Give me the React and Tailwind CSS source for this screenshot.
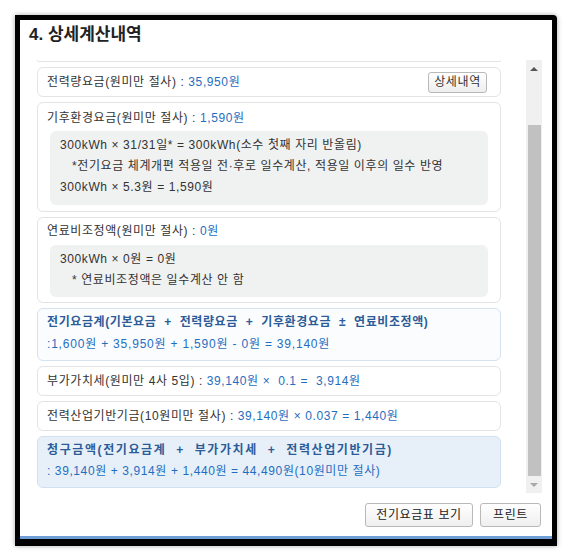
import React from "react";

const font = { fontFamily: '"Liberation Sans", "Noto Sans CJK KR", sans-serif' };

const Card = ({ className = "", children }) => (
    <div className={`w-[464px] shrink-0 rounded-[6px] border ${className}`}>{children}</div>
);

const Blue = ({ children }) => <span className="text-[#1f6ec0]">{children}</span>;

const App = () => {
    return (
        <div className="w-[572px] h-[558px] bg-white pt-[15px] pl-[15px] text-[12px] text-[#333] tracking-[0.6px]" style={font}>
            <div className="w-[542px] h-[531px] border-[5px] border-b-[7px] border-black rounded-tr-[4px] shadow-[0_0_5px_rgba(0,0,0,0.35)] flex flex-col bg-white">
                <div className="h-[40px] pl-[9px] pt-[4px] text-[17px] leading-[22px] font-bold text-[#222] tracking-normal">4. 상세계산내역</div>

                <div className="mx-[10px] h-[433px] flex">
                    <div className="flex-1 overflow-hidden pl-[7px] flex flex-col gap-[5px]">
                        <div className="w-[464px] h-[2px] shrink-0 border border-t-0 border-[#e4e4e4] rounded-b-[6px]" />

                        <Card className="border-[#e4e4e4] h-[30px] flex items-center justify-between pl-[9px] pr-[13px]">
                            <span>
                                전력량요금(원미만 절사) : <Blue>35,950원</Blue>
                            </span>
                            <button className="w-[59px] h-[21px] rounded-[3px] border border-[#b9b9b9] bg-gradient-to-b from-white to-[#eeeeee] text-[12px] text-[#333]">
                                상세내역
                            </button>
                        </Card>

                        <Card className="border-[#e4e4e4] pt-[6px] pb-[6px] px-[12px]">
                            <div className="leading-[18px] -ml-[3px]">
                                기후환경요금(원미만 절사) : <Blue>1,590원</Blue>
                            </div>
                            <div className="mt-[4px] rounded-[6px] bg-[#f0f1f1] pl-[10px] pt-[4px] pb-[7px] leading-[21px]">
                                <div>300kWh × 31/31일* = 300kWh(소수 첫째 자리 반올림)</div>
                                <div className="pl-[12px]">*전기요금 체계개편 적용일 전·후로 일수계산, 적용일 이후의 일수 반영</div>
                                <div>300kWh × 5.3원 = 1,590원</div>
                            </div>
                        </Card>

                        <Card className="border-[#e4e4e4] pt-[4px] pb-[5px] px-[12px]">
                            <div className="leading-[18px] -ml-[3px]">
                                연료비조정액(원미만 절사) : <Blue>0원</Blue>
                            </div>
                            <div className="mt-[5px] rounded-[6px] bg-[#f0f1f1] pl-[10px] pt-[4px] pb-[6px] leading-[21px]">
                                <div>300kWh × 0원 = 0원</div>
                                <div className="pl-[12px]">* 연료비조정액은 일수계산 안 함</div>
                            </div>
                        </Card>

                        <Card className="border-[#d5e3f1] bg-[#fbfcfe] pt-[4px] pb-[7px] pl-[9px]">
                            <div className="leading-[18px] font-bold text-[#2c5c98] whitespace-pre tracking-[0.6px]">
                                {"전기요금계(기본요금  +  전력량요금  +  기후환경요금  ±  연료비조정액)"}
                            </div>
                            <div className="mt-[4px] leading-[18px] text-[#1f6ec0] whitespace-pre tracking-[0.8px]">
                                {":1,600원 + 35,950원 + 1,590원 - 0원 = 39,140원"}
                            </div>
                        </Card>

                        <Card className="border-[#e4e4e4] py-[5px] pl-[9px] leading-[18px] whitespace-pre">
                            부가가치세(원미만 4사 5입) : <Blue>{"39,140원 ×  0.1 =  3,914원"}</Blue>
                        </Card>

                        <Card className="border-[#e4e4e4] py-[5px] pl-[9px] leading-[18px] whitespace-pre">
                            전력산업기반기금(10원미만 절사) : <Blue>{"39,140원 × 0.037 = 1,440원"}</Blue>
                        </Card>

                        <Card className="border-[#cfe0f1] bg-[#e7f0f9] pt-[4px] pb-[7px] pl-[9px]">
                            <div className="leading-[18px] font-bold text-[#2c5c98] whitespace-pre tracking-[1.6px]">
                                {"청구금액(전기요금계  +  부가가치세  +  전력산업기반기금)"}
                            </div>
                            <div className="mt-[3px] leading-[18px] text-[#1f6ec0] whitespace-pre">
                                {": 39,140원 + 3,914원 + 1,440원 = 44,490원(10원미만 절사)"}
                            </div>
                        </Card>
                    </div>

                    <div className="w-[16px] bg-[#f0f0f0] flex flex-col items-center">
                        <div className="h-[17px] w-full flex items-center justify-center">
                            <div className="w-0 h-0 border-l-[4px] border-r-[4px] border-b-[4px] border-l-transparent border-r-transparent border-b-[#555]" />
                        </div>
                        <div className="mt-[48px] w-[13px] h-[351px] bg-[#c1c1c1]" />
                        <div className="flex-1" />
                        <div className="h-[17px] w-full flex items-center justify-center">
                            <div className="w-0 h-0 border-l-[4px] border-r-[4px] border-t-[4px] border-l-transparent border-r-transparent border-t-[#a8a8a8]" />
                        </div>
                    </div>
                </div>

                <div className="mt-[10px] pr-[11px] flex justify-end gap-[7px]">
                    <button className="w-[108px] h-[24px] rounded-[3px] border border-[#b9b9b9] bg-gradient-to-b from-white to-[#efefef] text-[12px] text-[#222]">
                        전기요금표 보기
                    </button>
                    <button className="w-[61px] h-[24px] rounded-[3px] border border-[#b9b9b9] bg-gradient-to-b from-white to-[#efefef] text-[12px] text-[#222]">
                        프린트
                    </button>
                </div>

                <div className="mt-auto h-[3px] bg-[#6f9fd6]" />
            </div>
        </div>
    );
};

export default App;
